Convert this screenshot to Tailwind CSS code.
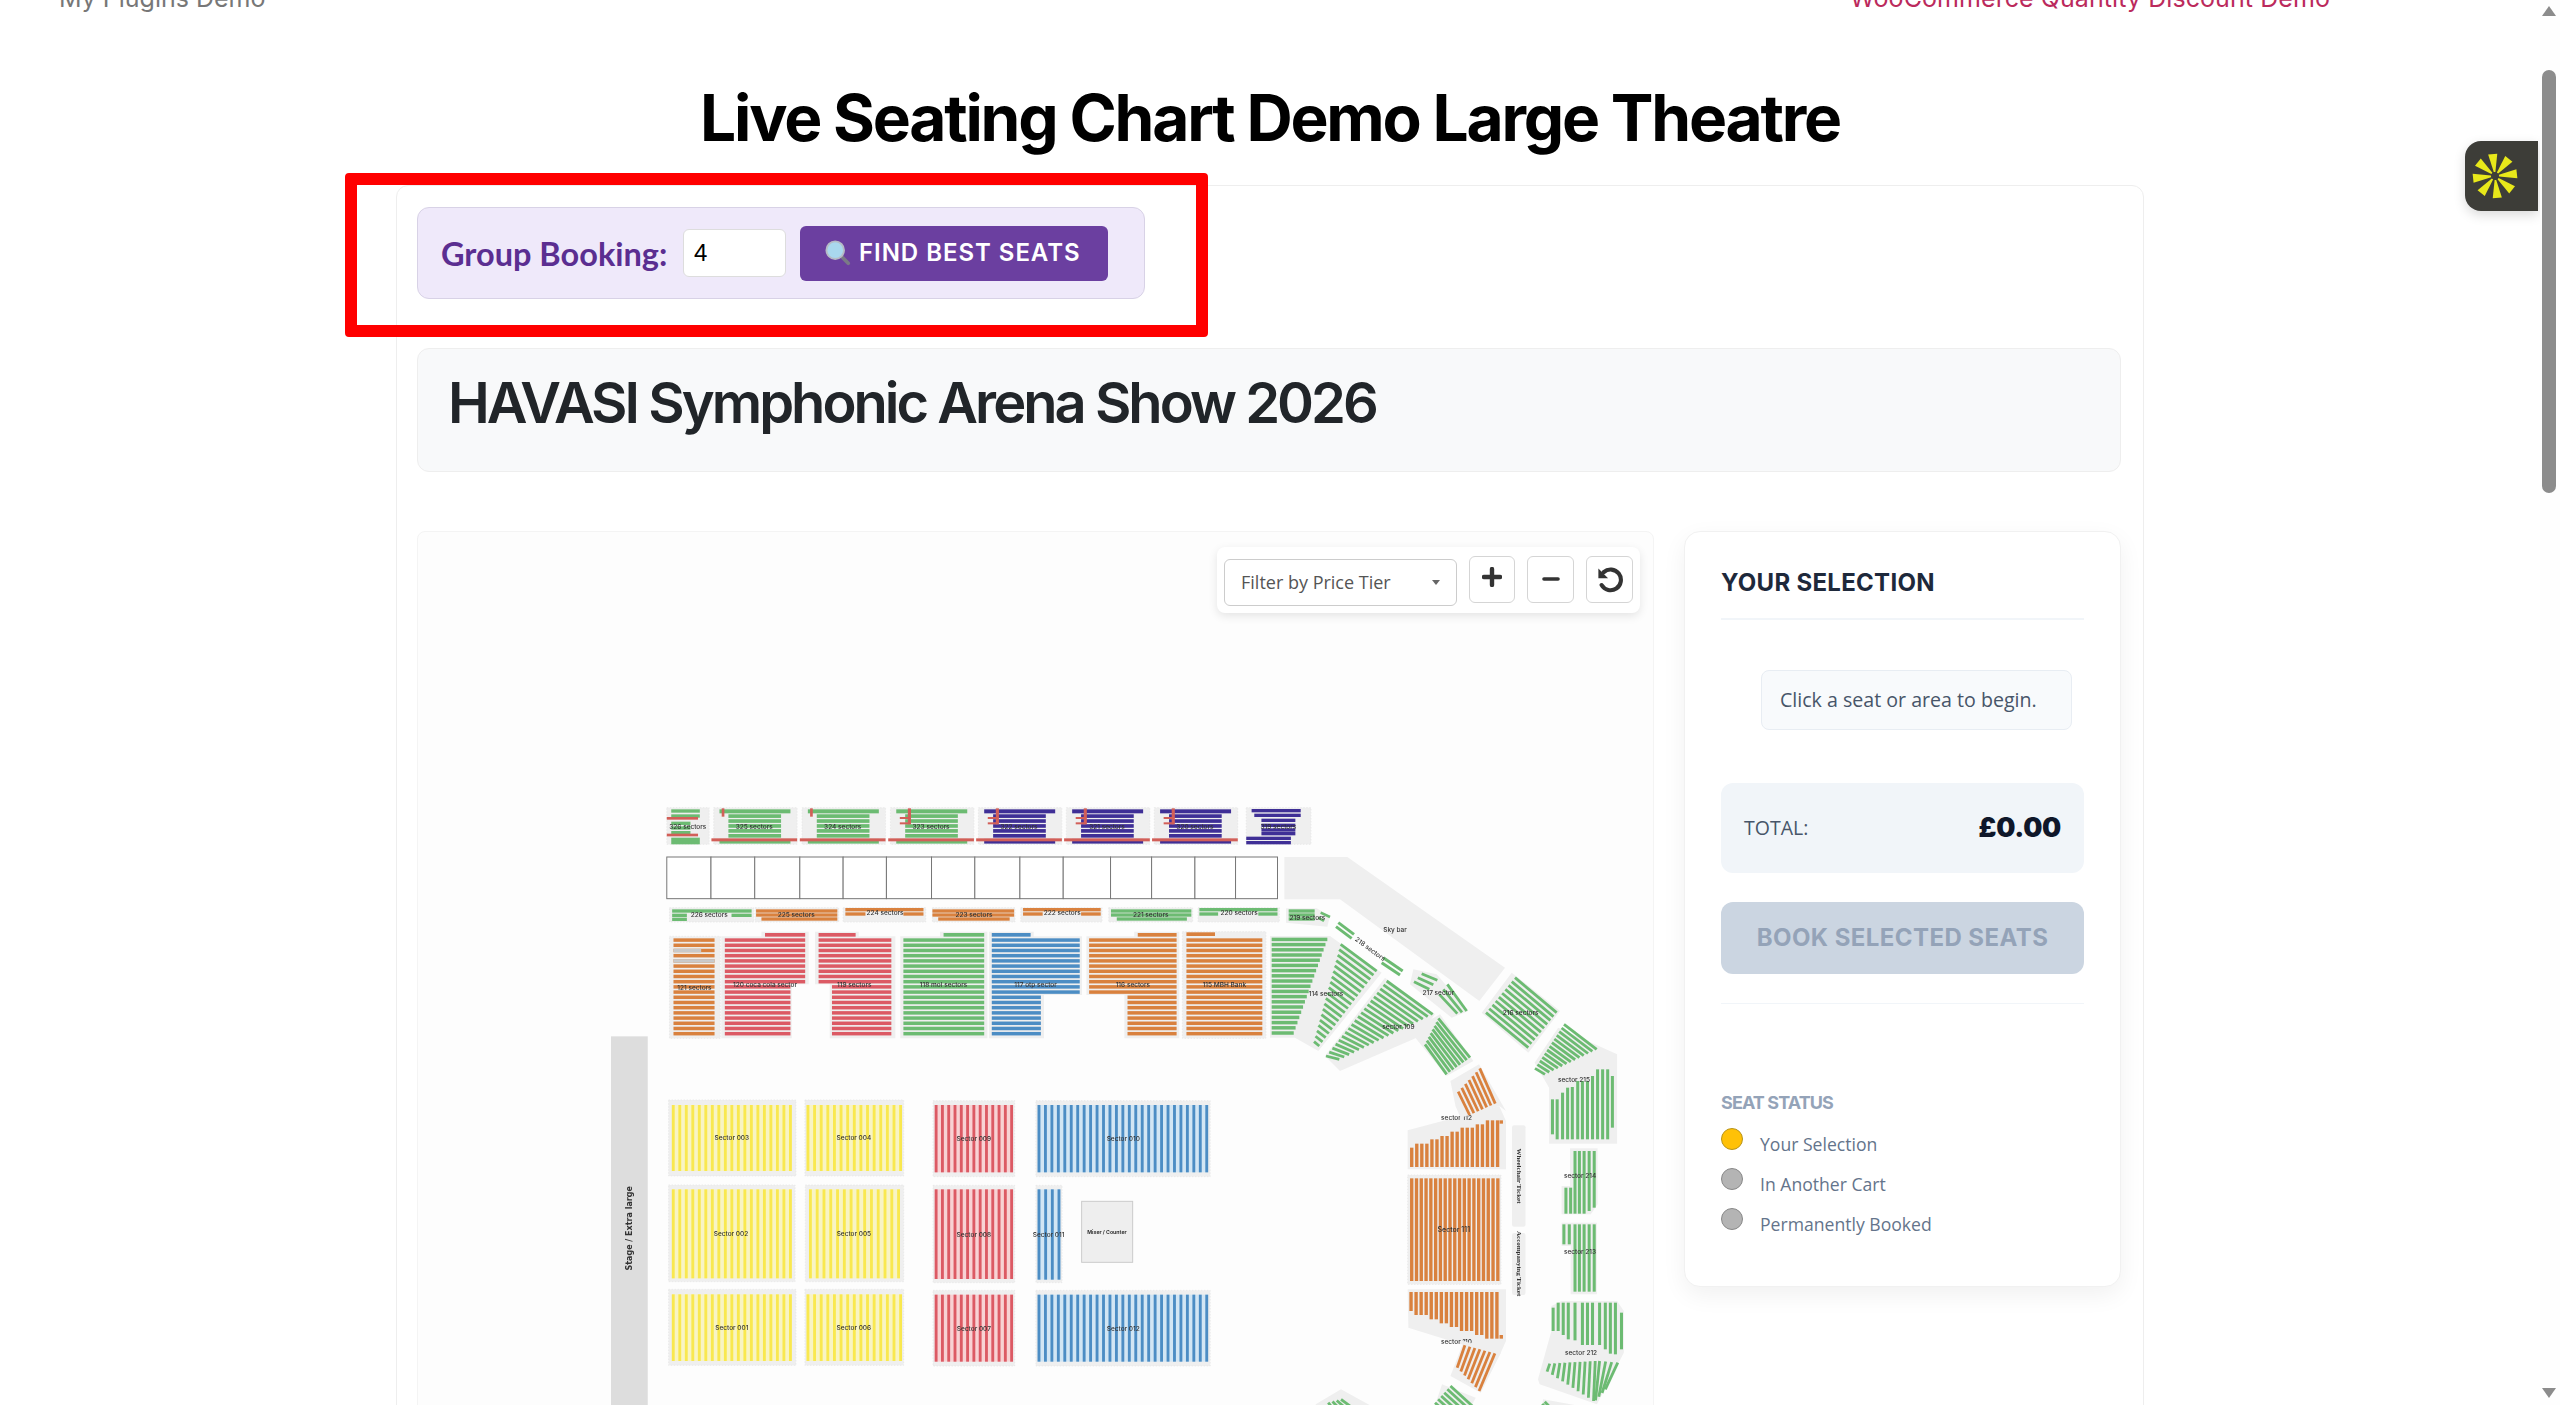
<!DOCTYPE html>
<html lang="en">
<head>
    <meta charset="UTF-8">
    <meta name="viewport" content="width=device-width, initial-scale=1.0">
    <title>Live Seating Chart Demo Large Theatre</title>
    <script src="https://cdn.jsdelivr.net/npm/@tailwindcss/browser@4"></script>
</head>
<body class="bg-white">
<div class="relative w-[2560px] h-[1405px] overflow-hidden font-['Inter',sans-serif]">
    <!-- top nav, scrolled mostly out of view -->
    <nav class="flex justify-between w-[2540px] h-[10px] pl-[59px] pr-[210px] text-[25px] leading-[30px] -translate-y-[17px]">
        <a class="text-[#777777]">My Plugins Demo</a>
        <a class="text-[#bb2a5c] tracking-[0.003em]">WooCommerce Quantity Discount Demo</a>
    </nav>

    <main class="w-[2540px]">
        <h1 class="h-[175px] pt-[72px] text-center text-[64px] leading-[72px] font-bold tracking-[-0.0345em] text-black">Live Seating Chart Demo Large Theatre</h1>

        <div class="ml-[396px] w-[1748px] h-[1300px] border border-[#eeeeee] rounded-xl pt-[21px] pl-[20px] pr-[22px]">
            <!-- group booking -->
            <div class="flex items-center w-[728px] h-[92px] pl-[23px] rounded-xl border border-[#d8d2e6] bg-[#efe9fa]">
                <span class="w-[242px] pt-[2px] text-[32.5px] font-bold text-[#5b2e91] font-['Lato',sans-serif]">Group Booking:</span>
                <input value="4" class="w-[103px] h-[48px] px-[10px] rounded-md border border-[#dddddd] bg-white text-[24px] text-black font-['Liberation_Sans',sans-serif]">
                <button class="flex items-center ml-[14px] w-[308px] h-[55px] pl-[25px] gap-[8px] rounded-md bg-[#6b3fa0] text-white text-[24px] font-semibold tracking-[0.04em]">
                    <svg width="26" height="26" viewBox="0 0 28 28"><path d="M17 17l8 8" stroke="#7a7a86" stroke-width="4" stroke-linecap="round"/><circle cx="11" cy="11" r="9.5" fill="#a9d8ee" stroke="#b6bcc6" stroke-width="2"/></svg>
                    FIND BEST SEATS
                </button>
            </div>

            <div class="mt-[49px] h-[124px] rounded-xl border border-[#eeeeee] bg-[#f8f9fa] pl-[30px] pt-[20px]">
                <h2 class="text-[56px] leading-[68px] font-semibold tracking-[-0.053em] text-[#212529]">HAVASI Symphonic Arena Show 2026</h2>
            </div>

            <div class="flex mt-[59px] gap-[30px]">
                <!-- map -->
                <div class="relative w-[1237px] h-[900px] rounded-lg border border-[#f4f4f4] bg-[#fdfdfd] shrink-0">
                    <svg id="map" class="absolute left-[-1px] top-0 blur-[0.4px]" width="1238" height="900" viewBox="417 531 1238 900"></svg>
                    <div class="absolute left-[799px] top-[15px] flex w-[423px] h-[66px] pl-[7px] pt-[9px] gap-[12px] rounded-lg bg-white shadow-[0_3px_10px_rgba(0,0,0,0.1)]">
                        <div class="flex items-center justify-between w-[233px] h-[47px] mt-[3px] pl-[16px] pr-[15px] rounded-md border border-[#cccccc] text-[18px] text-[#555555] font-['Open_Sans',sans-serif]">
                            Filter by Price Tier
                            <svg width="10" height="6" viewBox="0 0 10 6"><path d="M1 0h8L5 5z" fill="#666666"/></svg>
                        </div>
                        <button class="flex items-center justify-center w-[46px] h-[47px] rounded-md border border-[#d5d5d5] bg-white">
                            <svg width="20" height="20" viewBox="0 0 20 20" class="-mt-[5px]"><path d="M10 2v16M2 10h16" stroke="#333333" stroke-width="4.4" stroke-linecap="round"/></svg>
                        </button>
                        <button class="flex items-center justify-center w-[47px] h-[47px] rounded-md border border-[#d5d5d5] bg-white">
                            <svg width="20" height="20" viewBox="0 0 20 20" class="-mt-[2px]"><path d="M3 10h14" stroke="#333333" stroke-width="3.6" stroke-linecap="round"/></svg>
                        </button>
                        <button class="flex items-center justify-center w-[47px] h-[47px] rounded-md border border-[#d5d5d5] bg-white">
                            <svg width="28" height="28" viewBox="0 0 26 26" class="-mt-[2px]"><path d="M7.2 6.6A9.6 9.6 0 1 1 5.2 18.6" fill="none" stroke="#333333" stroke-width="3.8" stroke-linecap="round"/><path d="M2.2 3.2v9h9z" fill="#333333"/></svg>
                        </button>
                    </div>
                </div>

                <!-- sidebar -->
                <aside class="w-[437px] h-[756px] rounded-2xl border border-[#f1f1f1] bg-white pl-[36px] pr-[36px] shadow-[0_8px_24px_rgba(0,0,0,0.06)] shrink-0">
                    <h3 class="h-[88px] pt-[35px] text-[24px] leading-[32px] font-bold tracking-[0.012em] text-[#1e293b] border-b-2 border-[#f1f5f9]">YOUR SELECTION</h3>
                    <div class="ml-[40px] mt-[50px] w-[311px] h-[60px] flex items-center pl-[18px] rounded-lg border border-[#e8edf3] bg-[#f8fafc] text-[19.6px] text-[#475569] font-['Open_Sans',sans-serif]">Click a seat or area to begin.</div>
                    <div class="flex items-center justify-between mt-[53px] h-[90px] px-[23px] rounded-xl bg-[#f1f5f9]">
                        <span class="text-[19.5px] text-[#475569] font-['Open_Sans',sans-serif]">TOTAL:</span>
                        <span class="text-[27px] font-black tracking-[-0.01em] text-[#0f172a]">£0.00</span>
                    </div>
                    <button class="mt-[29px] w-full h-[72px] rounded-xl bg-[#cbd5e1] text-[24px] font-bold tracking-[0.018em] text-[#94a3b8]">BOOK SELECTED SEATS</button>
                    <div class="mt-[29px] border-t border-[#f1f5f9] pt-[87px]">
                        <div class="text-[18px] leading-[24px] font-bold tracking-[-0.05em] text-[#94a3b8]">SEAT STATUS</div>
                        <ul class="mt-[13px] flex flex-col gap-[13px] text-[17.6px] leading-[22px] text-[#64748b] font-['Open_Sans',sans-serif]">
                            <li class="flex gap-[17px]"><span class="w-[22px] h-[22px] rounded-full border border-[#b8941a] bg-[#ffc107]"></span><span class="pt-[5px]">Your Selection</span></li>
                            <li class="flex gap-[17px]"><span class="w-[22px] h-[22px] rounded-full border border-[#888888] bg-[#b4b4b4]"></span><span class="pt-[5px]">In Another Cart</span></li>
                            <li class="flex gap-[17px]"><span class="w-[22px] h-[22px] rounded-full border border-[#888888] bg-[#b4b4b4]"></span><span class="pt-[5px]">Permanently Booked</span></li>
                        </ul>
                    </div>
                </aside>
            </div>
        </div>
    </main>

    <!-- annotation box -->
    <div class="absolute left-[345px] top-[173px] w-[863px] h-[164px] border-[12px] border-[#ff0000] rounded"></div>

    <!-- floating widget -->
    <div class="absolute left-[2465px] top-[141px] w-[73px] h-[70px] flex items-center pl-[7px] rounded-l-2xl bg-[#3d3d38] shadow-[0_4px_12px_rgba(0,0,0,0.15)]">
        <svg width="46" height="46" viewBox="-23 -23 46 46">
            <g fill="#e8e81a">
                <polygon points="-.8,-4 .8,-4 4.6,-22 -4.6,-22" transform="rotate(-6)"/>
                <polygon points="-.8,-4 .8,-4 4.6,-22 -4.6,-22" transform="rotate(39)"/>
                <polygon points="-.8,-4 .8,-4 4.6,-22 -4.6,-22" transform="rotate(84)"/>
                <polygon points="-.8,-4 .8,-4 4.6,-22 -4.6,-22" transform="rotate(129)"/>
                <polygon points="-.8,-4 .8,-4 4.6,-22 -4.6,-22" transform="rotate(174)"/>
                <polygon points="-.8,-4 .8,-4 4.6,-22 -4.6,-22" transform="rotate(219)"/>
                <polygon points="-.8,-4 .8,-4 4.6,-22 -4.6,-22" transform="rotate(264)"/>
                <polygon points="-.8,-4 .8,-4 4.6,-22 -4.6,-22" transform="rotate(309)"/>
            </g>
        </svg>
    </div>

    <!-- scrollbar -->
    <div class="absolute right-0 top-0 w-[20px] h-[1405px] bg-[#fefefe]">
        <svg class="absolute left-[2px] top-[6px]" width="14" height="10" viewBox="0 0 14 10"><path d="M7 0l7 10H0z" fill="#8c8c8c"/></svg>
        <div class="absolute left-[2px] top-[70px] w-[14px] h-[423px] rounded-full bg-[#8c8c8c]"></div>
        <svg class="absolute left-[2px] top-[1388px]" width="14" height="10" viewBox="0 0 14 10"><path d="M0 0h14L7 10z" fill="#8c8c8c"/></svg>
    </div>
</div>

<script>
    // zoomed crop coords -> page px
    const Z4 = (x, y) => [640 + x / 2.24, 780 + y / 3];
    const Z5 = (x, y) => [1250 + x / 3, 780 + y / 3];
    const Z6 = (x, y) => [600 + x / 2.45, 1030 + y / 3];
    const Z7 = (x, y) => [1240 + x / 2.97, 1030 + y / 3];

    const GREEN = "#6cbb72", ORANGE = "#d9813e", RED = "#dc5a64", BLUE = "#4c8dc4", PURPLE = "#3f2f96", YELLOW = "#f9e84f", HOT = "#d25f58", BG = "#efefef";
    let out = "";

    function rect(Z, x1, y1, x2, y2, fill, extra = "") {
        const [a, b] = Z(x1, y1), [c, d] = Z(x2, y2);
        out += `<rect x="${a}" y="${b}" width="${c - a}" height="${d - b}" fill="${fill}" ${extra}/>`;
    }
    function bg(Z, x1, y1, x2, y2) {
        rect(Z, x1, y1, x2, y2, BG, 'stroke="#e2e2e2" stroke-width="0.6" stroke-dasharray="1.5 1.5"');
    }
    function poly(Z, pts, fill = BG) {
        out += `<polygon points="${pts.map(p => Z(p[0], p[1]).join(",")).join(" ")}" fill="${fill}"/>`;
    }
    function line(Z, x1, y1, x2, y2, color, sw = 3) {
        const [a, b] = Z(x1, y1), [c, d] = Z(x2, y2);
        out += `<line x1="${a}" y1="${b}" x2="${c}" y2="${d}" stroke="${color}" stroke-width="${sw}"/>`;
    }
    // n parallel-ish bars whose ends run along P1-P2 and Q1-Q2
    function fan(Z, P1, P2, Q1, Q2, n, color, sw = 2.8) {
        for (let i = 0; i < n; i++) {
            const t = n > 1 ? i / (n - 1) : 0;
            line(Z, P1[0] + (P2[0] - P1[0]) * t, P1[1] + (P2[1] - P1[1]) * t, Q1[0] + (Q2[0] - Q1[0]) * t, Q1[1] + (Q2[1] - Q1[1]) * t, color, sw);
        }
    }
    function label(Z, x, y, text, size = 6.5, rot = 0, weight = 500, fam = "Inter") {
        const [a, b] = Z(x, y);
        out += `<text x="${a}" y="${b}" font-family="${fam}, sans-serif" font-size="${size}" font-weight="${weight}" fill="#333" text-anchor="middle" dominant-baseline="middle"${rot ? ` transform="rotate(${rot} ${a} ${b})"` : ""}>${text}</text>`;
    }
    function vbars(Z, x1, x2, y1, y2, n, color, w) {
        const pitch = (x2 - x1) / n;
        for (let i = 0; i < n; i++) rect(Z, x1 + i * pitch, y1, x1 + i * pitch + pitch * w, y2, color);
    }

    // --- 300 row ---
    const topY = i => 85 + 14.8 * i;
    function top3(off, color, name, hook) {
        bg(Z4, 165 + off, 80, 352 + off, 190);
        rect(Z4, 178 + off, topY(0), 337 + off, topY(0) + 12, color);
        for (let i = 1; i < 6; i++) rect(Z4, 198 + off, topY(i), 316 + off, topY(i) + 11, color);
        rect(Z4, 178 + off, topY(6), 337 + off, topY(6) + 14, color);
        rect(Z4, 160 + off, 172, 352 + off, 181, HOT);
        if (hook) {
            rect(Z4, 204 + off, 82, 211 + off, 130, HOT);
            rect(Z4, 186 + off, 108, 208 + off, 114, HOT);
            rect(Z4, 186 + off, 124, 208 + off, 130, HOT);
        } else {
            rect(Z4, 183 + off, 82, 189 + off, 107, HOT);
        }
        label(Z4, 256 + off, 139, name);
    }
    bg(Z4, 60, 80, 155, 190);
    [[85, 134], [100, 134], [122, 113], [136, 113], [150, 113], [170, 134], [180, 134]].forEach(r => rect(Z4, 70, r[0], r[1], r[0] + 10, GREEN));
    rect(Z4, 60, 108, 130, 116, HOT);
    rect(Z4, 60, 158, 130, 166, HOT);
    label(Z4, 107, 139, "326 sectors");
    top3(0, GREEN, "325 sectors");
    top3(198, GREEN, "324 sectors");
    top3(396, GREEN, "323 sectors", true);
    top3(593, PURPLE, "322 sectors", true);
    top3(790, PURPLE, "321 sectors", true);
    top3(987, PURPLE, "320 sectors", true);
    bg(Z4, 1358, 80, 1503, 190);
    [[1370, 1480, 84], [1376, 1480, 98], [1392, 1468, 113], [1392, 1468, 128], [1392, 1468, 142], [1392, 1468, 153], [1358, 1458, 167], [1358, 1458, 180]].forEach(r => rect(Z4, r[0], r[2], r[1], r[2] + 10, PURPLE));
    label(Z4, 1430, 140, "319 sectors");

    // --- empty box row ---
    const boxes = [60, 159, 257, 358, 455, 552, 653, 750, 851, 948, 1054, 1146, 1243, 1334, 1428];
    for (let i = 0; i < boxes.length - 1; i++) rect(Z4, boxes[i], 228, boxes[i + 1], 353, "#ffffff", 'stroke="#777" stroke-width="1"');

    // sky bar
    poly(Z5, [[103, 228], [292, 228], [765, 560], [688, 660], [270, 355], [103, 355]]);
    label(Z5, 435, 447, "Sky bar");

    // --- 200 row ---
    [[66, 255], [258, 445], [455, 640], [655, 840], [853, 1035], [1050, 1238], [1250, 1432]].forEach(b => bg(Z4, b[0], 380, b[1], 423));
    const r2 = [
        [GREEN, 72, 250, 385], [GREEN, 72, 105, 398], [GREEN, 205, 250, 398], [GREEN, 72, 105, 410],
        [ORANGE, 260, 442, 385], [ORANGE, 260, 442, 397], [ORANGE, 272, 442, 409],
        [ORANGE, 460, 635, 381], [ORANGE, 460, 505, 394], [ORANGE, 590, 635, 394],
        [ORANGE, 655, 838, 385], [ORANGE, 655, 838, 397], [ORANGE, 668, 828, 409],
        [ORANGE, 858, 1032, 381], [ORANGE, 858, 902, 394], [ORANGE, 988, 1032, 394],
        [GREEN, 1055, 1235, 385], [GREEN, 1055, 1235, 397], [GREEN, 1068, 1225, 409],
        [GREEN, 1253, 1428, 381], [GREEN, 1253, 1295, 394], [GREEN, 1385, 1428, 394]
    ];
    r2.forEach(r => rect(Z4, r[1], r[3], r[2], r[3] + 10, r[0]));
    poly(Z5, [[108, 382], [200, 382], [240, 405], [232, 437], [108, 425]]);
    [385, 397, 409].forEach(y => rect(Z5, 116, y, 194, y + 10, GREEN));
    line(Z5, 212, 395, 240, 408, GREEN, 2.6);
    line(Z5, 205, 410, 222, 420, GREEN, 2.6);
    [["226 sectors", 155, 404], ["225 sectors", 350, 404], ["224 sectors", 549, 397], ["223 sectors", 748, 404], ["222 sectors", 946, 397], ["221 sectors", 1144, 404], ["220 sectors", 1342, 397]].forEach(l => label(Z4, l[1], l[2], l[0]));
    label(Z5, 172, 411, "219 sectors");

    // --- 100 row ---
    const rowY = i => 472 + 15.6 * i;
    const rows = (x1, x2, from, to, color) => { for (let i = from; i < to; i++) rect(Z4, x1, rowY(i), x2, rowY(i) + 10.5, color); };
    bg(Z4, 66, 466, 180, 772); rows(75, 167, 0, 19, ORANGE);
    rect(Z4, 75, rowY(2), 137, rowY(2) + 10.5, "#c9c9c9"); rect(Z4, 75, rowY(4), 167, rowY(4) + 10.5, "#c9c9c9");
    poly(Z4, [[182, 466], [272, 466], [272, 452], [378, 452], [378, 610], [340, 610], [340, 772], [182, 772]]);
    rect(Z4, 280, 456, 370, 467, RED); rows(190, 370, 0, 9, RED); rows(190, 337, 9, 19, RED);
    poly(Z4, [[392, 452], [490, 452], [490, 466], [572, 466], [572, 772], [425, 772], [425, 610], [392, 610]]);
    rect(Z4, 400, 456, 483, 467, RED); rows(400, 563, 0, 9, RED); rows(430, 563, 9, 19, RED);
    poly(Z4, [[583, 466], [672, 466], [672, 452], [778, 452], [778, 772], [583, 772]]);
    rect(Z4, 680, 456, 771, 467, GREEN); rows(590, 771, 0, 19, GREEN);
    poly(Z4, [[782, 452], [882, 452], [882, 466], [990, 466], [990, 642], [905, 642], [905, 772], [782, 772]]);
    rect(Z4, 788, 456, 875, 467, BLUE); rows(788, 985, 0, 11, BLUE); rows(788, 898, 11, 19, BLUE);
    poly(Z4, [[1000, 466], [1107, 466], [1107, 452], [1208, 452], [1208, 772], [1085, 772], [1085, 642], [1000, 642]]);
    rect(Z4, 1115, 456, 1202, 467, ORANGE); rows(1006, 1202, 0, 11, ORANGE); rows(1092, 1202, 11, 19, ORANGE);
    bg(Z4, 1215, 452, 1402, 772);
    rect(Z4, 1224, 454, 1288, 465, ORANGE); rows(1224, 1394, 0, 19, ORANGE);
    [["121 sectors", 122, 621], ["120 coca cola sector", 280, 614], ["119 sectors", 480, 614], ["118 mol sectors", 680, 614], ["117 otp sector", 886, 614], ["116 sectors", 1104, 614], ["115 MBH Bank", 1309, 614]].forEach(l => label(Z4, l[1], l[2], l[0]));

    // 114
    poly(Z5, [[60, 465], [240, 465], [395, 575], [205, 810], [135, 770], [60, 770]]);
    for (let i = 0; i < 19; i++) { const y = 470 + i * 15.6; rect(Z5, 65, y, 232 - i * 5.6, y + 10.5, GREEN); }
    fan(Z5, [272, 490], [192, 782], [380, 570], [208, 795], 19, GREEN);
    label(Z5, 228, 641, "114 sectors");

    // 218 / 217 / 109
    line(Z5, 265, 425, 312, 460, GREEN); line(Z5, 258, 437, 305, 472, GREEN);
    line(Z5, 400, 530, 458, 570, GREEN); line(Z5, 395, 545, 450, 582, GREEN);
    label(Z5, 360, 505, "218 sectors", 6.5, 36);
    poly(Z5, [[490, 565], [560, 580], [655, 690], [605, 710], [480, 610]]);
    fan(Z5, [515, 578], [492, 602], [562, 598], [538, 625], 3, GREEN);
    fan(Z5, [592, 610], [568, 640], [650, 690], [622, 698], 3, GREEN);
    label(Z5, 565, 637, "217 sector");
    poly(Z5, [[405, 590], [555, 700], [500, 770], [270, 870], [225, 825]]);
    fan(Z5, [410, 600], [228, 825], [548, 700], [268, 835], 20, GREEN);
    label(Z5, 445, 738, "sector 109");
    poly(Z5, [[570, 700], [670, 840], [590, 885], [520, 800], [480, 750]]);
    fan(Z5, [565, 712], [525, 790], [660, 830], [590, 880], 8, GREEN);

    // 216 / 215
    poly(Z5, [[785, 575], [930, 690], [835, 815], [695, 695]]);
    fan(Z5, [795, 590], [708, 695], [920, 695], [835, 800], 10, GREEN);
    label(Z5, 812, 696, "216 sectors");
    poly(Z7, [[945, -10], [1120, 70], [1120, 338], [918, 338], [918, 170], [875, 95]]);
    fan(Z5, [942, 730], [855, 862], [1040, 805], [885, 880], 13, GREEN);
    [[928, 205, 310], [942, 205, 325], [958, 185, 325], [973, 170, 325], [987, 168, 325], [1003, 150, 325], [1017, 150, 325], [1032, 150, 325], [1047, 135, 325], [1062, 115, 325], [1077, 115, 325], [1092, 115, 325], [1106, 135, 290]].forEach(c => rect(Z7, c[0] - 4.5, c[1], c[0] + 4.5, c[2], GREEN));
    label(Z7, 992, 149, "sector 215");

    // 214 / 213
    poly(Z7, [[980, 352], [1062, 352], [1062, 520], [1042, 550], [955, 550], [955, 465], [980, 465]]);
    [[968, 470, 548], [982, 470, 548], [995, 360, 548], [1008, 360, 548], [1022, 360, 548], [1037, 360, 540], [1052, 360, 530]].forEach(c => rect(Z7, c[0] - 4.5, c[1], c[0] + 4.5, c[2], GREEN));
    label(Z7, 1010, 436, "sector 214");
    poly(Z7, [[955, 575], [1060, 575], [1060, 790], [982, 790], [982, 645], [955, 645]]);
    [[962, 580, 640], [978, 580, 640], [995, 580, 782], [1008, 580, 782], [1022, 580, 782], [1037, 580, 782], [1052, 580, 782]].forEach(c => rect(Z7, c[0] - 4.5, c[1], c[0] + 4.5, c[2], GREEN));
    label(Z7, 1010, 664, "sector 213");

    // 212
    poly(Z7, [[925, 825], [955, 810], [1120, 810], [1140, 840], [1140, 965], [1130, 985], [1060, 1120], [890, 1060], [885, 1045], [925, 900]]);
    [[930, 830, 900], [945, 815, 900], [960, 815, 912], [975, 815, 925], [995, 815, 928], [1017, 815, 942], [1032, 815, 942], [1047, 815, 942], [1068, 815, 942], [1085, 815, 955], [1100, 815, 968], [1115, 815, 970], [1133, 845, 955]].forEach(c => rect(Z7, c[0] - 4.5, c[1], c[0] + 4.5, c[2], GREEN));
    fan(Z7, [920, 998], [1055, 990], [912, 1022], [1050, 1110], 10, GREEN);
    fan(Z7, [1068, 990], [1122, 995], [1056, 1108], [1085, 1075], 4, GREEN);
    label(Z7, 1013, 967, "sector 212");

    // 112 / 111 / 110
    const tops = [350, 338, 338, 338, 325, 325, 315, 315, 302, 302, 290, 290, 290, 280, 280, 268, 268, 268];
    const bots = [840, 852, 852, 852, 865, 865, 877, 877, 888, 888, 900, 900, 900, 912, 912, 923, 923, 923];
    poly(Z7, [[498, 298], [770, 225], [790, 270], [790, 415], [498, 415]]);
    tops.forEach((t, i) => rect(Z7, 505 + i * 15, t, 515 + i * 15, 408, ORANGE));
    rect(Z7, 771, 268, 781, 278, ORANGE);
    label(Z7, 643, 262, "sector 112");
    poly(Z7, [[625, 150], [710, 100], [790, 240], [770, 225], [655, 260], [640, 225]]);
    fan(Z7, [712, 112], [648, 182], [758, 218], [682, 252], 7, ORANGE);
    bg(Z7, 498, 432, 775, 760);
    vbars(Z7, 505, 775, 442, 750, 19, ORANGE, 0.7);
    label(Z7, 635, 597, "Sector 111", 7);
    poly(Z7, [[498, 775], [790, 775], [790, 930], [770, 975], [500, 890]]);
    bots.forEach((b, i) => rect(Z7, 503 + i * 15, 783, 513 + i * 15, b, ORANGE));
    rect(Z7, 771, 912, 781, 923, ORANGE);
    label(Z7, 643, 934, "sector 110");
    poly(Z7, [[665, 930], [775, 965], [715, 1085], [625, 1035]]);
    fan(Z7, [668, 943], [757, 967], [645, 1010], [710, 1080], 7, ORANGE);

    // side tickets
    rect(Z7, 808, 283, 848, 587, BG, 'rx="2"');
    rect(Z7, 808, 606, 848, 792, BG, 'rx="2"');
    label(Z7, 828, 435, "Wheelchair Ticket", 7, 90, 700, "Liberation Serif");
    label(Z7, 828, 698, "Accompanying Ticket", 7, 90, 700, "Liberation Serif");

    // cut-off sections along the bottom edge
    poly(Z7, [[600, 1060], [700, 1100], [660, 1180], [560, 1180]]);
    fan(Z7, [625, 1065], [570, 1125], [690, 1125], [630, 1180], 7, GREEN);
    poly(Z7, [[225, 1120], [300, 1075], [390, 1125], [390, 1200], [225, 1200]]);
    fan(Z7, [300, 1105], [262, 1115], [340, 1135], [290, 1150], 4, GREEN);
    poly(Z7, [[900, 1105], [1010, 1125], [1010, 1200], [890, 1200]]);
    fan(Z7, [905, 1112], [890, 1125], [960, 1170], [930, 1170], 3, GREEN);

    // --- floor sectors ---
    rect(Z6, 27, 16, 117, 1300, "#dddddd");
    label(Z6, 72, 592, "Stage / Extra large", 8, -90, 700, "DejaVu Sans");

    function sector(x1, x2, y1, y2, bx1, bx2, by1, by2, n, color, tint, name, lx, ly) {
        bg(Z6, x1, y1, x2, y2);
        rect(Z6, bx1, by1, bx2, by2, tint);
        const pitch = (bx2 - bx1 - 7) / (n - 1);
        for (let i = 0; i < n; i++) rect(Z6, bx1 + i * pitch, by1, bx1 + i * pitch + 7, by2, color);
        label(Z6, lx, ly, name, 6.5);
    }
    const YT = "#f8f4c4", RT = "#f8d2d4", BT = "#d2e6f4";
    sector(168, 480, 207, 435, 176, 470, 222, 420, 19, YELLOW, YT, "Sector 003", 323, 322);
    sector(502, 744, 207, 435, 506, 740, 222, 420, 15, YELLOW, YT, "Sector 004", 622, 322);
    sector(168, 478, 462, 752, 176, 470, 475, 742, 19, YELLOW, YT, "Sector 002", 321, 609);
    sector(503, 744, 462, 752, 512, 735, 475, 742, 14, YELLOW, YT, "Sector 005", 622, 609);
    sector(168, 480, 775, 1003, 176, 470, 790, 990, 19, YELLOW, YT, "Sector 001", 323, 892);
    sector(502, 744, 775, 1003, 506, 740, 790, 990, 15, YELLOW, YT, "Sector 006", 622, 892);
    sector(816, 1016, 209, 437, 820, 1012, 222, 424, 13, RED, RT, "Sector 009", 916, 324);
    sector(816, 1016, 463, 755, 820, 1012, 475, 744, 13, RED, RT, "Sector 008", 916, 612);
    sector(816, 1016, 778, 1005, 820, 1012, 791, 992, 13, RED, RT, "Sector 007", 916, 894);
    sector(1068, 1495, 209, 437, 1072, 1490, 222, 424, 27, BLUE, BT, "Sector 010", 1282, 324);
    sector(1068, 1132, 463, 755, 1072, 1128, 475, 746, 4, BLUE, BT, "Sector 011", 1099, 612);
    sector(1068, 1495, 778, 1005, 1072, 1490, 791, 992, 27, BLUE, BT, "Sector 012", 1282, 894);
    rect(Z6, 1180, 511, 1305, 694, "#eeeeee", 'stroke="#cccccc" stroke-width="1"');
    label(Z6, 1242, 605, "Mixer / Counter", 5.2, 0, 700);

    document.getElementById("map").innerHTML = out;
</script>
</body>
</html>
